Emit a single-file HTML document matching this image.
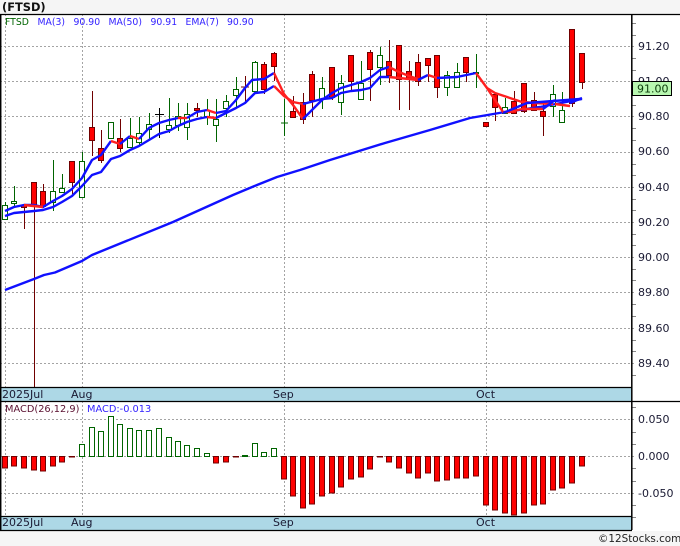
<!DOCTYPE html>
<html><head><meta charset="utf-8"><style>
html,body{margin:0;padding:0;background:#f5f5f5}
svg{display:block;font-family:"DejaVu Sans",sans-serif}
.w{stroke-width:1;fill:none}
.R rect{fill:#f00;stroke:#700000}
.G rect{fill:#fff;stroke:#006400}
.grid{stroke:#a4a4a4;stroke-width:1;stroke-dasharray:2 2;fill:none}
.b{fill:none;stroke:#1010ff;stroke-width:2.4;stroke-linejoin:round}
.r{fill:none;stroke:#ff2020;stroke-width:2.4;stroke-linejoin:round}
.k{stroke:#000;fill:none}
.t{stroke:#888;fill:none;stroke-width:1}
.p{font-size:11px;fill:#1a1a33}
.d{font-size:11px;fill:#1a1a33}
.l{font-size:9.3px;fill:#3322ff}
</style></head><body>
<svg width="680" height="546" viewBox="0 0 680 546" xmlns="http://www.w3.org/2000/svg">
<rect width="680" height="546" fill="#f5f5f5"/>
<rect x="0" y="14" width="680" height="517" fill="#fff"/>
<rect x="1" y="388" width="631" height="13" fill="#add8e6"/>
<rect x="1" y="517" width="631" height="13" fill="#add8e6"/>
<text x="2" y="11" font-size="11.4" font-weight="bold" fill="#111">(FTSD)</text>

<path class="grid" d="M0 46.5H636M0 81.5H632M0 116.5H636M0 152.5H636M0 187.5H636M0 222.5H636M0 257.5H636M0 292.5H636M0 328.5H636M0 363.5H636M0 419.5H636M0 456.5H636M0 493.5H636M5.5 14V387M82.5 14V387M284.5 14V387M486.5 14V387M5.5 401V516M82.5 401V516M284.5 401V516M486.5 401V516"/>

<text x="5" y="25" font-size="9.3" fill="#006400">FTSD</text>
<text x="37.5" y="25" class="l">MA(3)</text><text x="73.5" y="25" class="l">90.90</text>
<text x="108.5" y="25" class="l">MA(50)</text><text x="150.5" y="25" class="l">90.91</text>
<text x="185.5" y="25" class="l">EMA(7)</text><text x="227" y="25" class="l">90.90</text>
<text x="5" y="412" font-size="9.8" fill="#5a1030">MACD(26,12,9)</text>
<text x="87" y="412" font-size="9.8" fill="#3322ff">MACD:-0.013</text>

<path class="w" stroke="#006400" d="M5.5 202V220M14.5 186V207M53.5 160V211M62.5 174V192M82.5 152V197M111.5 122V139M130.5 118V147M139.5 117V145M149.5 113V140M169.5 98V133M178.5 103V131M187.5 103V140M207.5 99V125M216.5 99V142M226.5 95V117M236.5 77V107M255.5 61V94M284.5 99V136M281 123H288M322.5 77V109M341.5 75V115M361.5 61V99M380.5 47V85M447.5 71V96M457.5 63V88M476.5 54V88M505.5 98V113M553.5 85V117M562.5 92V122"/>
<path class="w" stroke="#700000" d="M24.5 204V229M34.5 182V387M43.5 184V208M72.5 161V194M92.5 91V156M101.5 130V163M120.5 119V152M197.5 103V117M245.5 76V102M241 87H249M264.5 62V94M274.5 52V81M293.5 96V117M303.5 93V124M312.5 71V117M332.5 67V100M351.5 55V92M370.5 50V101M389.5 40V83M399.5 45V110M409.5 61V110M418.5 54V86M428.5 58V82M437.5 55V98M466.5 57V82M486.5 122V127M495.5 94V121M514.5 91V114M524.5 83V113M534.5 92V111M543.5 103V136M572.5 29V107M582.5 53V89"/>
<path class="w" stroke="#000" d="M159.5 108V138M155 114.5H164"/>
<g class="G">
<rect x="2.5" y="205.5" width="5" height="14"/><rect x="11.5" y="201.5" width="5" height="2"/><rect x="50.5" y="191.5" width="5" height="11"/><rect x="59.5" y="188.5" width="5" height="4"/><rect x="79.5" y="161.5" width="5" height="36"/><rect x="108.5" y="122.5" width="5" height="16"/><rect x="127.5" y="138.5" width="5" height="9"/><rect x="136.5" y="133.5" width="5" height="9"/><rect x="146.5" y="124.5" width="5" height="5"/><rect x="166.5" y="125.5" width="5" height="4"/><rect x="175.5" y="116.5" width="5" height="9"/><rect x="184.5" y="114.5" width="5" height="13"/><rect x="204.5" y="110.5" width="5" height="6"/><rect x="213.5" y="119.5" width="5" height="6"/><rect x="223.5" y="101.5" width="5" height="7"/><rect x="233.5" y="89.5" width="5" height="6"/><rect x="252.5" y="62.5" width="5" height="29"/><rect x="319.5" y="88.5" width="5" height="11"/><rect x="338.5" y="83.5" width="5" height="19"/><rect x="358.5" y="83.5" width="5" height="16"/><rect x="377.5" y="55.5" width="5" height="12"/><rect x="444.5" y="75.5" width="5" height="12"/><rect x="454.5" y="72.5" width="5" height="15"/><rect x="473.5" y="72.5" width="5" height="1"/><rect x="502.5" y="107.5" width="5" height="6"/><rect x="550.5" y="94.5" width="5" height="12"/><rect x="559.5" y="110.5" width="5" height="12"/>
</g>
<g class="R">
<rect x="21.5" y="205.5" width="5" height="2"/><rect x="31.5" y="182.5" width="5" height="23"/><rect x="40.5" y="191.5" width="5" height="15"/><rect x="69.5" y="161.5" width="5" height="21"/><rect x="89.5" y="127.5" width="5" height="13"/><rect x="98.5" y="148.5" width="5" height="12"/><rect x="117.5" y="138.5" width="5" height="10"/><rect x="194.5" y="108.5" width="5" height="2"/><rect x="261.5" y="64.5" width="5" height="25"/><rect x="271.5" y="53.5" width="5" height="13"/><rect x="290.5" y="111.5" width="5" height="6"/><rect x="300.5" y="102.5" width="5" height="17"/><rect x="309.5" y="74.5" width="5" height="26"/><rect x="329.5" y="67.5" width="5" height="30"/><rect x="348.5" y="55.5" width="5" height="26"/><rect x="367.5" y="52.5" width="5" height="17"/><rect x="386.5" y="61.5" width="5" height="14"/><rect x="396.5" y="45.5" width="5" height="34"/><rect x="406.5" y="71.5" width="5" height="8"/><rect x="415.5" y="62.5" width="5" height="19"/><rect x="425.5" y="58.5" width="5" height="7"/><rect x="434.5" y="55.5" width="5" height="32"/><rect x="463.5" y="57.5" width="5" height="15"/><rect x="483.5" y="122.5" width="5" height="4"/><rect x="492.5" y="94.5" width="5" height="13"/><rect x="511.5" y="101.5" width="5" height="12"/><rect x="521.5" y="83.5" width="5" height="28"/><rect x="531.5" y="100.5" width="5" height="10"/><rect x="540.5" y="111.5" width="5" height="5"/><rect x="569.5" y="29.5" width="5" height="74"/><rect x="579.5" y="53.5" width="5" height="29"/>
</g>

<polyline class="b" points="5,290 34,279 44,275 55,272.5 82,261 92,255 173,222 233,195 257,185 277,177 300,170 330,160 385,143 430,130 470,118 505,112 540,107 582,99"/>
<polyline class="b" points="5,211 14,207 24,205 34,205 43,207 53,201 62,196 72,189 82,178 92,160 101,155 111,141"/>
<polyline class="r" points="111,141 120,144"/>
<polyline class="r" points="24,205 43,207"/>
<polyline class="b" points="120,144 130,136"/><polyline class="r" points="130,136 139,139"/>
<polyline class="b" points="139,139 149,128 159,123 169,120 178,118"/><polyline class="r" points="178,118 187,118"/>
<polyline class="b" points="187,118 197,112 207,110"/><polyline class="r" points="207,110 216,113"/>
<polyline class="b" points="216,113 226,111 236,100 245,88 252,80 264,79 274,73"/>
<polyline class="r" points="274,73 284,94 293,105 303,119"/>
<polyline class="b" points="5,216 14,213 24,212 34,211 43,210 53,207 62,202 72,196 82,186 92,175 101,172 111,159 120,156 130,150 139,146 149,140 159,134 169,131 178,126 187,122 197,119 207,117"/>
<polyline class="r" points="207,117 216,118"/>
<polyline class="b" points="216,118 226,113 236,108 245,103 255,93 264,92 274,86"/>
<polyline class="r" points="274,86 284,96 293,102 303,104"/>
<polyline class="b" points="303,104 322,99 332,98 341,93 351,91 361,90 370,88 380,77 389,77"/>
<polyline class="r" points="389,77 409,79 418,80"/>
<polyline class="b" points="303,119 322,100 332,93 341,88 361,82 370,78 380,70 389,67"/>
<polyline class="r" points="389,67 399,72 409,76 418,79"/>
<polyline class="b" points="418,80 428,75"/><polyline class="r" points="428,75 437,78"/>
<polyline class="b" points="437,78 457,77 476,73"/>
<polyline class="r" points="476,73 487,88 495,93 522,102 535,103 553,104"/>
<polyline class="r" points="487,88 495,100 503,112 510,112 522,109 543,109"/>
<polyline class="b" points="503,113 527,103 580,99"/>
<polyline class="b" points="543,109 555,100"/>
<polyline class="r" points="555,104 570,106"/>
<polyline class="b" points="570,103 582,98"/>

<g class="R">
<rect x="2.5" y="456.5" width="5" height="11.5"/><rect x="11.5" y="456.5" width="5" height="9.5"/><rect x="21.5" y="456.5" width="5" height="11.5"/><rect x="31.5" y="456.5" width="5" height="13.5"/><rect x="40.5" y="456.5" width="5" height="14.5"/><rect x="50.5" y="456.5" width="5" height="9.5"/><rect x="59.5" y="456.5" width="5" height="5.5"/><rect x="69.5" y="456.5" width="5" height="0.5"/><rect x="213.5" y="456.5" width="5" height="6.5"/><rect x="223.5" y="456.5" width="5" height="5.5"/><rect x="233.5" y="456.5" width="5" height="0.5"/>
<rect x="281.5" y="456.5" width="5" height="22.5"/><rect x="290.5" y="456.5" width="5" height="39.5"/><rect x="300.5" y="456.5" width="5" height="51.5"/><rect x="309.5" y="456.5" width="5" height="47.5"/><rect x="319.5" y="456.5" width="5" height="39.5"/><rect x="329.5" y="456.5" width="5" height="36.5"/><rect x="338.5" y="456.5" width="5" height="30.5"/><rect x="348.5" y="456.5" width="5" height="22.5"/><rect x="358.5" y="456.5" width="5" height="20.5"/><rect x="367.5" y="456.5" width="5" height="12.5"/><rect x="377.5" y="456.5" width="5" height="0.5"/><rect x="386.5" y="456.5" width="5" height="5.5"/><rect x="396.5" y="456.5" width="5" height="11.5"/><rect x="406.5" y="456.5" width="5" height="16.5"/><rect x="415.5" y="456.5" width="5" height="21.5"/><rect x="425.5" y="456.5" width="5" height="16.5"/><rect x="434.5" y="456.5" width="5" height="24.5"/><rect x="444.5" y="456.5" width="5" height="23.5"/><rect x="454.5" y="456.5" width="5" height="21.5"/><rect x="463.5" y="456.5" width="5" height="21.5"/><rect x="473.5" y="456.5" width="5" height="19.5"/><rect x="483.5" y="456.5" width="5" height="48.5"/><rect x="492.5" y="456.5" width="5" height="53.5"/><rect x="502.5" y="456.5" width="5" height="56.5"/><rect x="511.5" y="456.5" width="5" height="58.5"/><rect x="521.5" y="456.5" width="5" height="56.5"/><rect x="531.5" y="456.5" width="5" height="48.5"/><rect x="540.5" y="456.5" width="5" height="47.5"/><rect x="550.5" y="456.5" width="5" height="33.5"/><rect x="559.5" y="456.5" width="5" height="31.5"/><rect x="569.5" y="456.5" width="5" height="26.5"/><rect x="579.5" y="456.5" width="5" height="9.5"/>
</g>
<g class="G">
<rect x="79.5" y="444.5" width="5" height="12"/><rect x="89.5" y="427.5" width="5" height="29"/><rect x="98.5" y="431.5" width="5" height="25"/><rect x="108.5" y="416.5" width="5" height="40"/><rect x="117.5" y="424.5" width="5" height="32"/><rect x="127.5" y="428.5" width="5" height="28"/><rect x="136.5" y="430.5" width="5" height="26"/><rect x="146.5" y="430.5" width="5" height="26"/><rect x="156.5" y="428.5" width="5" height="28"/><rect x="166.5" y="437.5" width="5" height="19"/><rect x="175.5" y="441.5" width="5" height="15"/><rect x="184.5" y="445.5" width="5" height="11"/><rect x="194.5" y="448.5" width="5" height="8"/><rect x="204.5" y="453.5" width="5" height="3"/><rect x="242.5" y="455.5" width="5" height="1"/><rect x="252.5" y="443.5" width="5" height="13"/><rect x="261.5" y="452.5" width="5" height="4"/><rect x="271.5" y="448.5" width="5" height="8"/>
</g>

<path class="t" d="M632 23.5H636M632 35.5H636M632 58.5H636M632 70.5H636M632 93.5H636M632 105.5H636M632 128.5H636M632 140.5H636M632 164.5H636M632 175.5H636M632 199.5H636M632 210.5H636M632 234.5H636M632 245.5H636M632 269.5H636M632 280.5H636M632 304.5H636M632 316.5H636M632 340.5H636M632 351.5H636M632 375.5H636M632 407.5H636M632 432.5H636M632 444.5H636M632 468.5H636M632 481.5H636M632 505.5H636M632 517.5H636"/>

<text class="p" x="638" y="50">91.20</text>
<text class="p" x="638" y="85">91.00</text>
<text class="p" x="638" y="120">90.80</text>
<text class="p" x="638" y="155">90.60</text>
<text class="p" x="638" y="191">90.40</text>
<text class="p" x="638" y="226">90.20</text>
<text class="p" x="638" y="261">90.00</text>
<text class="p" x="638" y="296">89.80</text>
<text class="p" x="638" y="332">89.60</text>
<text class="p" x="638" y="367">89.40</text>
<text class="p" x="638" y="423">0.050</text>
<text class="p" x="638" y="460">0.000</text>
<text class="p" x="638" y="497">-0.050</text>

<path class="k" stroke-width="1.2" d="M0 14.5H680M0 387.5H632M0 401.5H680M0 516.5H632M0 530.5H632"/>
<path class="k" stroke-width="1.5" d="M631.8 14V530M0.7 14V530"/>

<rect x="632.5" y="81.5" width="39" height="14" fill="#b8f7b0" stroke="#000"/>
<text x="637" y="92.5" font-size="11" fill="#0a3a0a">91.00</text>

<text class="d" x="2" y="398">2025Jul</text><text class="d" x="71" y="398">Aug</text><text class="d" x="273" y="398">Sep</text><text class="d" x="476" y="398">Oct</text>
<text class="d" x="2" y="526">2025Jul</text><text class="d" x="71" y="526">Aug</text><text class="d" x="273" y="526">Sep</text><text class="d" x="476" y="526">Oct</text>
<text x="598" y="542" font-size="10.4" fill="#222">©12Stocks.com</text>
</svg>
</body></html>
